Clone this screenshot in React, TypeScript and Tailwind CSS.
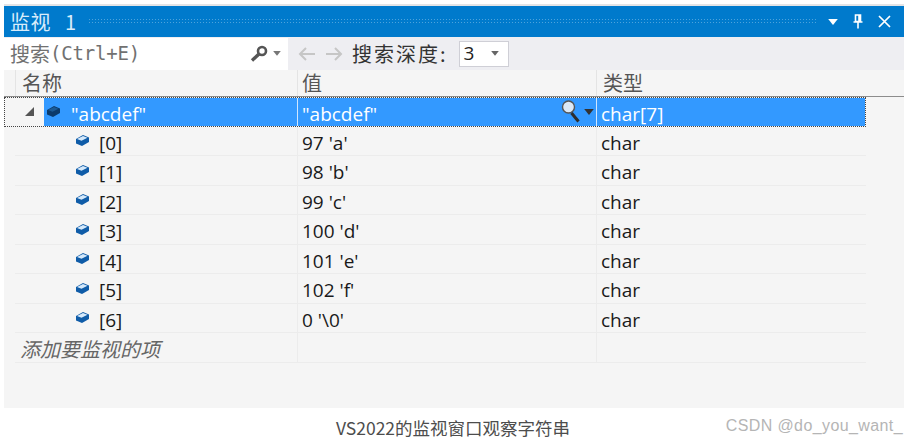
const cjk = "font-['Noto_Sans_CJK_SC','Noto_Sans',sans-serif]"

const rows = [
  { name: '[0]', value: "97 'a'" },
  { name: '[1]', value: "98 'b'" },
  { name: '[2]', value: "99 'c'" },
  { name: '[3]', value: "100 'd'" },
  { name: '[4]', value: "101 'e'" },
  { name: '[5]', value: "102 'f'" },
  { name: '[6]', value: "0 '\\0'" },
]

function Cube({ dark }: { dark?: boolean }) {
  return (
    <svg width="15" height="13" viewBox="0 0 15 13" className="shrink-0">
      <path d="M1 5 8 1 14 3.5V8L7 12 1 9.5Z" fill={dark ? '#0b3a6b' : '#0f5ca8'} strokeLinejoin="round" />
      <path d="M2 5 8 2 12.5 3.8 6.5 6.8Z" fill={dark ? '#1c5a94' : '#d5e9fb'} />
    </svg>
  )
}

function Caret({ color = '#555', w = 8 }: { color?: string; w?: number }) {
  return (
    <svg width={w} height={w * 0.6} viewBox="0 0 8 5" className="shrink-0">
      <path d="M0 0h8L4 5Z" fill={color} />
    </svg>
  )
}

function ChildRow({ name, value }: { name: string; value: string }) {
  return (
    <div className="flex h-[29.5px] items-center border-b border-[#ececec] text-[19px] text-[#1a1a1a]">
      <div className="flex h-full w-[283px] shrink-0 items-center gap-[9px] border-r border-[#ececec] pl-[60px]">
        <Cube />
        <span className="mt-[4px]">{name}</span>
      </div>
      <div className="flex h-full w-[299px] shrink-0 items-center border-r border-[#ececec] pl-[4px]">
        <span className="mt-[4px]">{value}</span>
      </div>
      <div className="mt-[4px] pl-[4px]">char</div>
    </div>
  )
}

export default function App() {
  return (
    <div className="flex h-[442px] w-[906px] flex-col overflow-hidden bg-white pt-[4px] pl-[4px] font-['Open_Sans',sans-serif]">
      <div className="flex h-[404px] w-[900px] shrink-0 flex-col border-t-2 border-[#e4e4e6] bg-[#f5f5f5]">
        {/* Title bar */}
        <div className={`flex h-[31px] shrink-0 items-center bg-[#007acc] pl-[6px] pr-[13px] text-[#d8ecfa] ${cjk}`}>
          <span className="text-[20px] tracking-[0.5px]">监视</span>
          <span className="ml-[14px] text-[20px]">1</span>
          <div className="ml-[12px] mr-[12px] h-[7px] flex-1 bg-[radial-gradient(#4da3dc_1px,transparent_1px)] bg-[length:3px_3px]" />
          <div className="flex items-center gap-[15px]">
            <Caret color="#ffffff" w={10} />
            <svg width="10" height="15" viewBox="0 0 10 15" fill="none" stroke="#fff" strokeWidth="1.6">
              <path d="M2.5 1h5v6.5h-5zM6 1v6.5M.5 8h9M5 8.5v6" />
            </svg>
            <svg width="13" height="13" viewBox="0 0 13 13" fill="none" stroke="#fff" strokeWidth="1.7">
              <path d="M1 1l11 11M12 1l-11 11" />
            </svg>
          </div>
        </div>

        {/* Search bar */}
        <div className="flex h-[33px] shrink-0 items-center bg-[#eeeef2]">
          <div className="flex h-[32px] w-[284px] shrink-0 items-center bg-white pl-[6px] pr-[7px] text-[#717171]">
            <span className={`text-[20px] ${cjk}`}>搜索</span>
            <span className="font-['DejaVu_Sans_Mono',monospace] text-[19px] tracking-[-0.2px]">(Ctrl+E)</span>
            <svg width="18" height="17" viewBox="0 0 18 17" fill="none" stroke="#555" className="ml-auto">
              <circle cx="12" cy="6" r="4" strokeWidth="2.6" />
              <path d="M9 9l-7 6.5" strokeWidth="3.4" />
            </svg>
            <span className="ml-[5px]"><Caret color="#777" /></span>
          </div>
          <svg width="64" height="16" viewBox="0 0 64 16" fill="none" stroke="#c6c6c6" strokeWidth="2" className="ml-[10px]">
            <path d="M17 8H2M8 2 2 8l6 6M28 8h15M37 2l6 6-6 6" />
          </svg>
          <span className={`-ml-[10px] text-[20px] tracking-[2px] text-[#333] ${cjk}`}>搜索深度:</span>
          <div className="ml-[11px] flex h-[26px] w-[50px] items-center justify-between border border-[#cfcfd6] bg-white pl-[4px] pr-[9px] text-[19px] text-[#222]">
            3
            <Caret color="#666" />
          </div>
        </div>

        {/* Column headers */}
        <div className={`flex h-[27px] shrink-0 items-center border-b border-[#8c8c8c] pl-[11px] text-[20px] text-[#555] ${cjk}`}>
          <div className="flex h-full w-[283px] shrink-0 items-center border-x border-[#e4e4e4] pl-[6px]">名称</div>
          <div className="flex h-full w-[299px] shrink-0 items-center border-r border-[#e4e4e4] pl-[4px]">值</div>
          <div className="flex h-full w-[268px] items-center pl-[6px]">类型</div>
        </div>

        {/* Grid rows */}
        <div className="w-[862px] pl-[11px]">
          <div className="-ml-[11px] flex h-[29.5px] w-[862px] items-center border border-dotted border-[#444] text-[19px] text-white">
            <div className="flex h-full w-[39px] shrink-0 items-center justify-end pr-[10px]">
              <svg width="9" height="9" viewBox="0 0 9 9"><path d="M9 0v9H0Z" fill="#555" /></svg>
            </div>
            <div className="flex h-full flex-1 items-center bg-[#3399ff]">
              <div className="flex h-full w-[254px] shrink-0 items-center gap-[10px] border-r border-[#cfe6ff] pl-[2px]">
                <Cube dark />
                <span className="mt-[4px]">"abcdef"</span>
              </div>
              <div className="flex h-full w-[299px] shrink-0 items-center border-r border-[#cfe6ff] pl-[4px]">
                <span className="mt-[4px]">"abcdef"</span>
                <svg width="20" height="25" viewBox="0 0 20 25" fill="none" className="ml-auto">
                  <circle cx="7.5" cy="8" r="6" fill="#dce9f6" stroke="#555" strokeWidth="1.4" />
                  <path d="M10.5 14l7 8.5" stroke="#2d2d2d" strokeWidth="3" />
                </svg>
                <span className="ml-[3px] mr-[2px]"><Caret color="#333" w={10} /></span>
              </div>
              <div className="mt-[4px] pl-[4px]">char[7]</div>
            </div>
          </div>
          {rows.map((r) => (
            <ChildRow key={r.name} name={r.name} value={r.value} />
          ))}
          <div className="flex h-[29.5px] items-center border-b border-[#ececec] text-[20px] text-[#666]">
            <div className={`flex h-full w-[283px] shrink-0 items-center border-r border-[#ececec] pl-[5px] italic ${cjk}`}>
              <span className="mt-[3px]">添加要监视的项</span>
            </div>
            <div className="h-full w-[299px] shrink-0 border-r border-[#ececec]" />
          </div>
        </div>
      </div>

      {/* Caption */}
      <div className={`relative flex flex-1 items-start justify-center pr-[4px] pt-[7px] text-[17.5px] text-[#4d4d4d] ${cjk}`}>
        <span>VS2022的监视窗口观察字符串</span>
        <span className="absolute right-[3px] top-[6px] font-['Liberation_Sans',sans-serif] text-[16px] tracking-[0.4px] text-[#b5b5b5]">CSDN @do_you_want_</span>
      </div>
    </div>
  )
}
